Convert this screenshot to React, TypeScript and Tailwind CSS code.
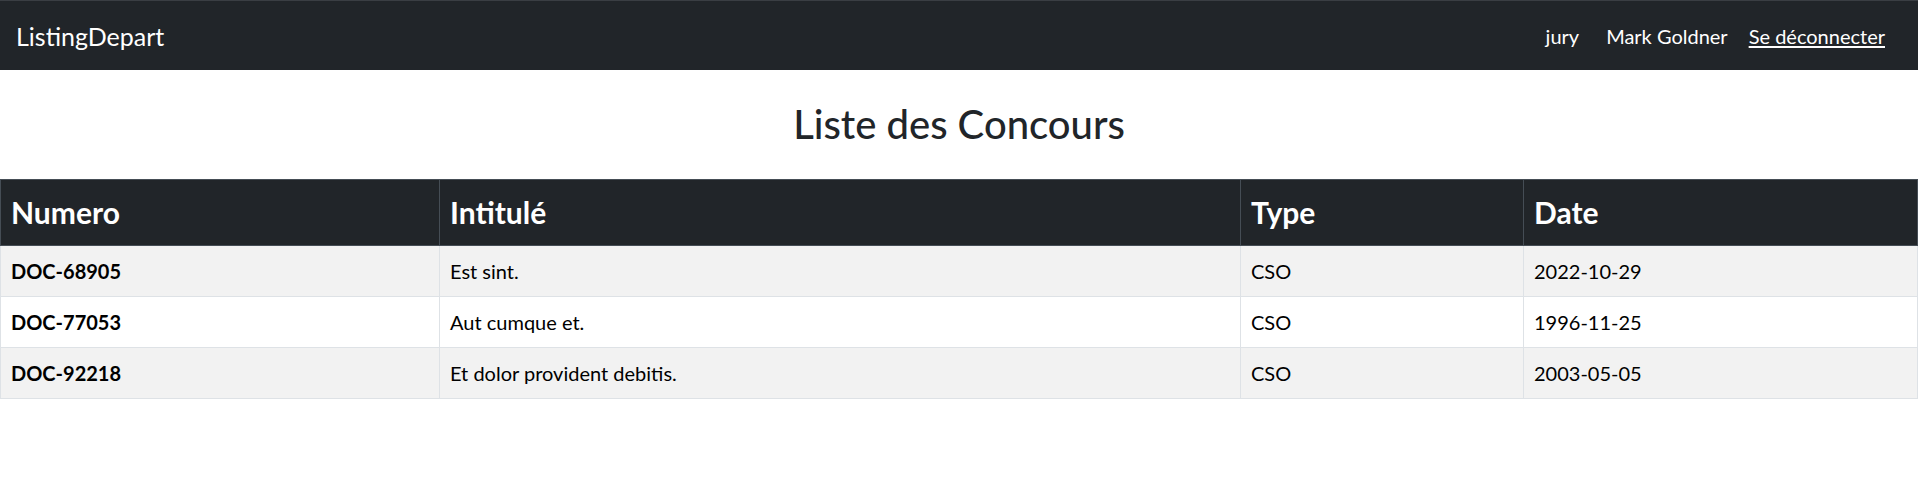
import React from "react";

const rows = [
  { num: "DOC-68905", title: "Est sint.", type: "CSO", date: "2022-10-29", striped: true },
  { num: "DOC-77053", title: "Aut cumque et.", type: "CSO", date: "1996-11-25", striped: false },
  { num: "DOC-92218", title: "Et dolor provident debitis.", type: "CSO", date: "2003-05-05", striped: true },
];

export default function App() {
  return (
    <div className="w-[1918px] h-[492px] bg-white font-['Lato','Noto_Sans',sans-serif] text-[#212529] overflow-hidden">
      <nav className="h-[70px] bg-[#212529] border-t border-[#3a3e43] flex items-center justify-between pl-[16px] pr-[33px]">
        <span className="text-[25px] leading-[30px] text-white">ListingDepart</span>
        <div className="flex items-center text-[20px] leading-[30px] text-white">
          <span>jury</span>
          <span className="ml-[27px]">Mark Goldner</span>
          <a className="ml-[21px] underline underline-offset-2" href="#">Se déconnecter</a>
        </div>
      </nav>

      <h1 className="mt-[30px] mb-[31px] h-[48px] text-[40px] leading-[48px] font-medium text-center text-[#212529]">
        Liste des Concours
      </h1>

      <div className="w-[1918px]">
        <div className="grid grid-cols-[439px_801px_283px_394px_1px] h-[67px] bg-[#212529] border-t border-b border-[#454d55] text-white text-[30px] font-bold">
          <div className="border-l border-[#454d55] pl-[10px] flex items-center">Numero</div>
          <div className="border-l border-[#454d55] pl-[10px] flex items-center">Intitulé</div>
          <div className="border-l border-[#454d55] pl-[10px] flex items-center">Type</div>
          <div className="border-l border-[#454d55] pl-[10px] flex items-center">Date</div>
          <div className="bg-[#454d55]"></div>
        </div>
        {rows.map((r) => (
          <div
            key={r.num}
            className={`grid grid-cols-[439px_801px_283px_394px_1px] h-[51px] border-b border-[#dee2e6] text-[20px] text-black ${r.striped ? "bg-[#f2f2f2]" : "bg-white"}`}
          >
            <div className="border-l border-[#dee2e6] pl-[10px] flex items-center font-bold">{r.num}</div>
            <div className="border-l border-[#dee2e6] pl-[10px] flex items-center">{r.title}</div>
            <div className="border-l border-[#dee2e6] pl-[10px] flex items-center">{r.type}</div>
            <div className="border-l border-[#dee2e6] pl-[10px] flex items-center">{r.date}</div>
            <div className="bg-[#dee2e6]"></div>
          </div>
        ))}
      </div>
    </div>
  );
}
